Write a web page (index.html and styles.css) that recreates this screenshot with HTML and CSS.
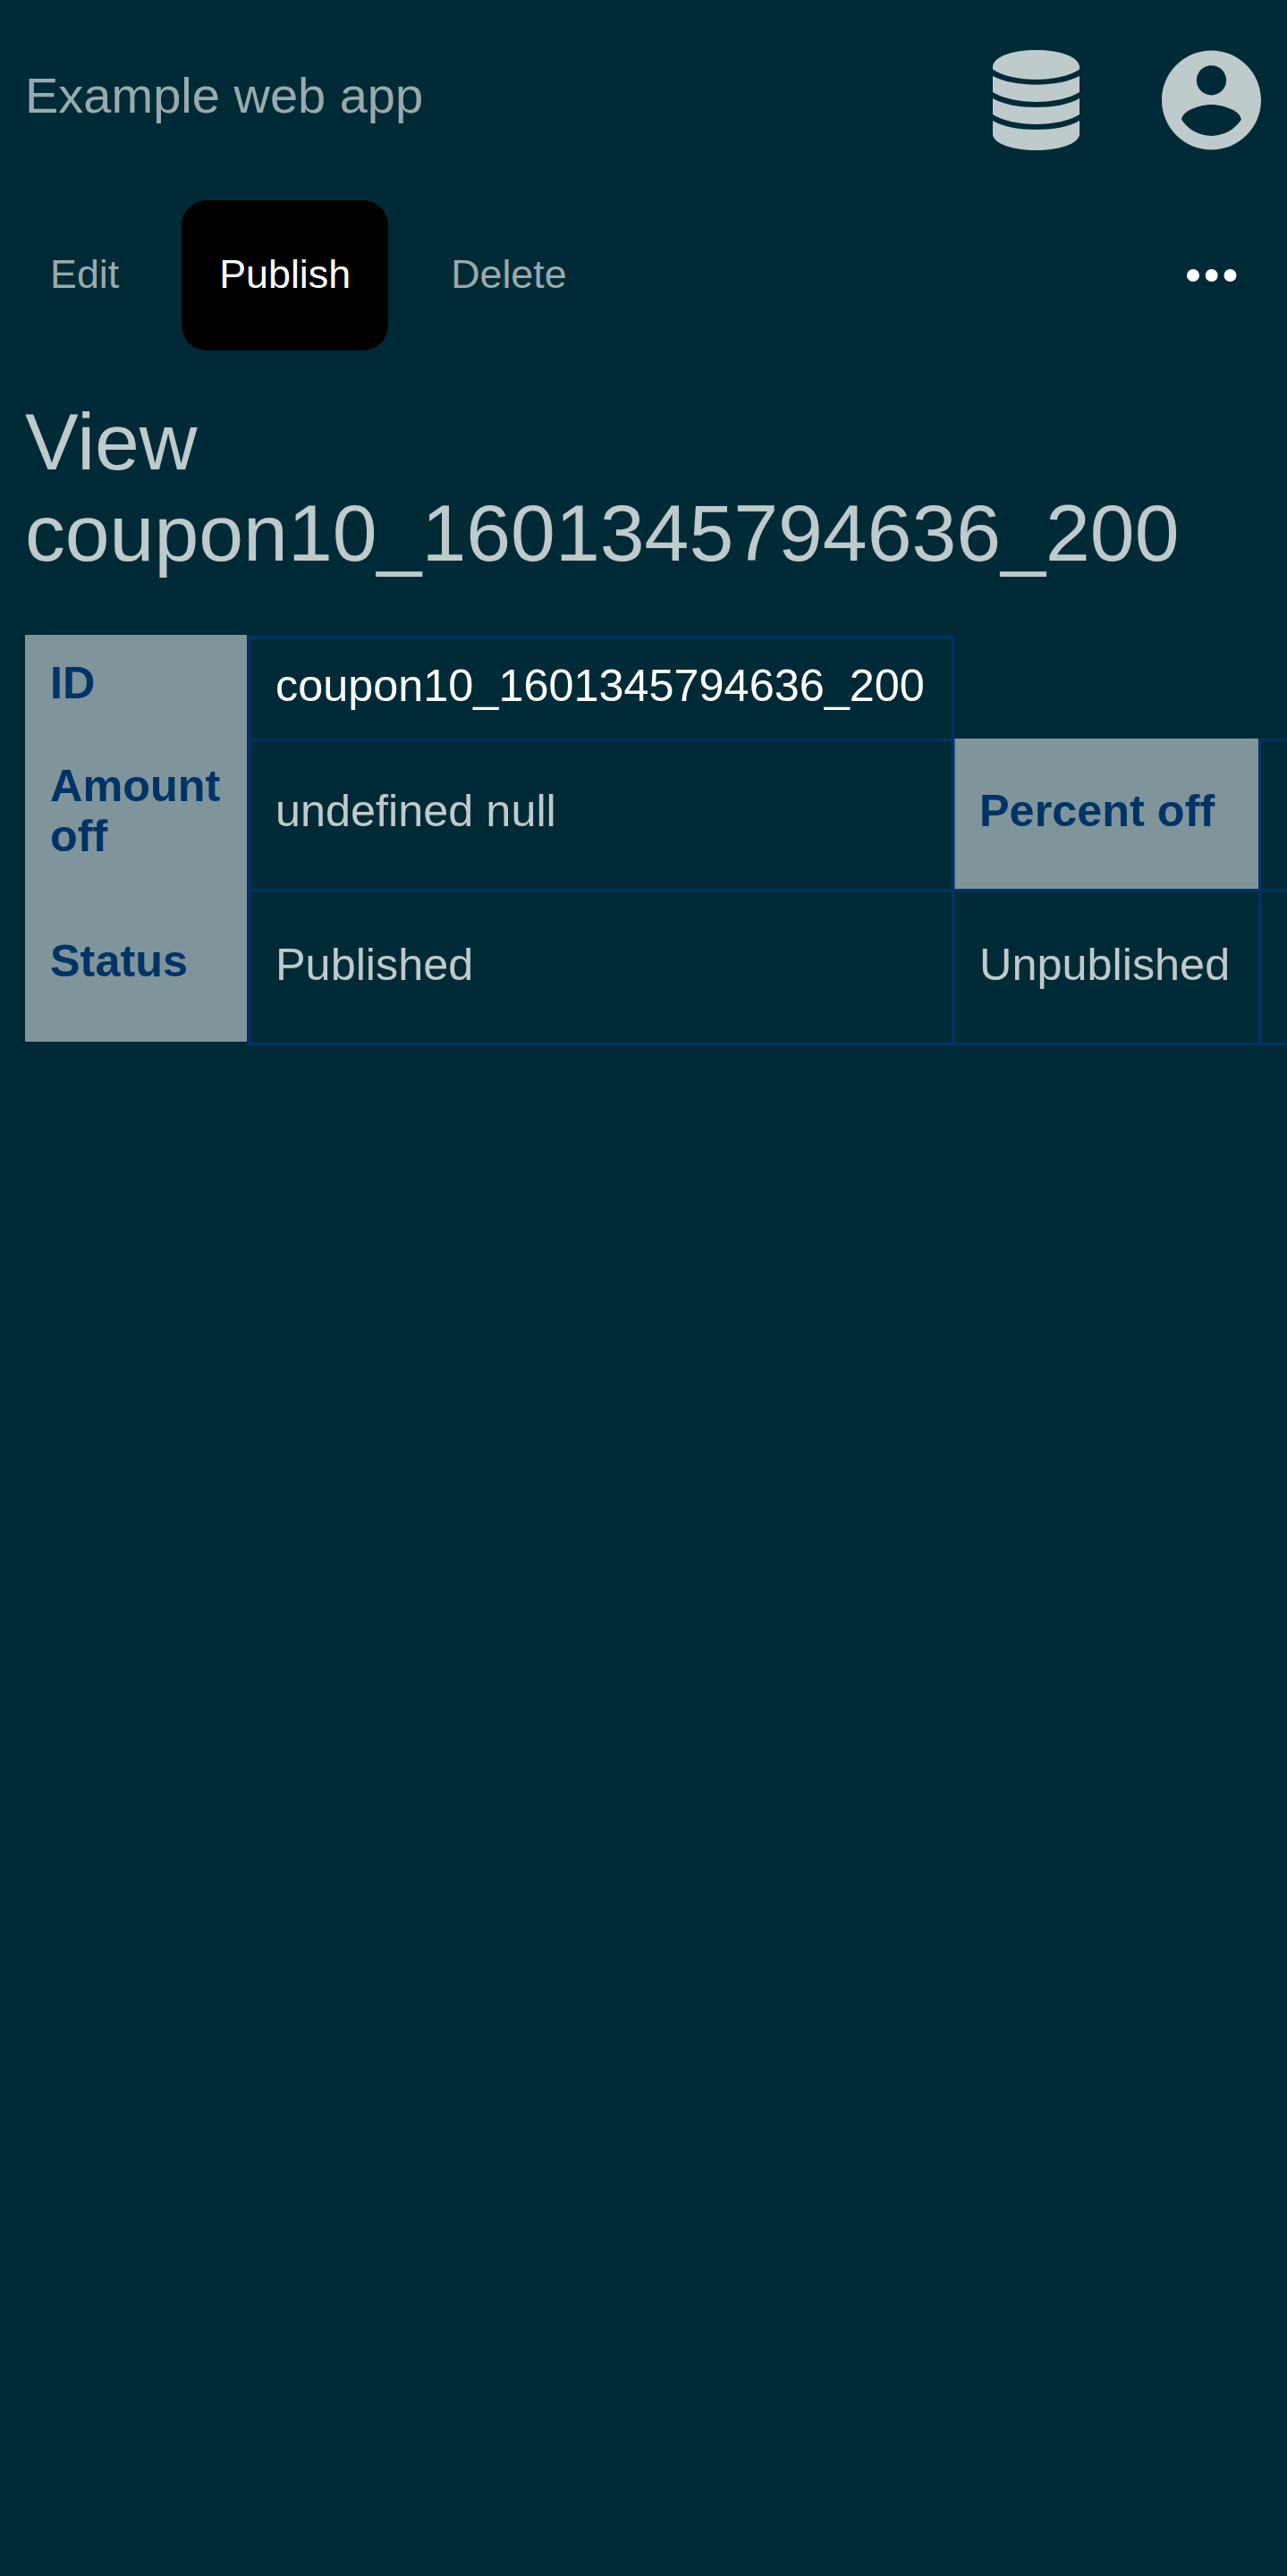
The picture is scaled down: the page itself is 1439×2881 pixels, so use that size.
FILE: index.html
```html
<!DOCTYPE html>
<html lang="en">
<head>
<meta charset="utf-8">
<title>Example web app</title>
<link rel="stylesheet" href="styles.css">
</head>
<body>
<header class="topbar">
  <a class="brand">Example web app</a>
  <nav class="topnav">
    <svg class="icon-db" viewBox="0 0 97 112"><path d="M0 18C2 7 22 0 48.500 0S95 7 97 18V21.500C86 29 67 33 48.500 33S11 29 0 21.500ZM0 29C12 35.500 30 38.700 48.500 38.700S85 35.500 97 29V47C86 54 67 58 48.500 58S11 54 0 47ZM0 54C12 61 30 64 48.500 64S85 61 97 54V72C86 79 67 83 48.500 83S11 79 0 72ZM0 79C12 86 30 89 48.500 89S85 86 97 79V95C95 105 75 112 48.500 112S2 105 0 95Z"/></svg>
    <svg class="icon-user" viewBox="2 2 20 20"><path d="M12 2C6.480 2 2 6.480 2 12s4.480 10 10 10 10-4.480 10-10S17.520 2 12 2zm0 3c1.660 0 3 1.340 3 3s-1.340 3-3 3-3-1.340-3-3 1.340-3 3-3zm0 14.200c-2.500 0-4.710-1.280-6-3.220.03-1.990 4-3.080 6-3.080 1.990 0 5.970 1.090 6 3.080-1.290 1.940-3.500 3.220-6 3.220z"/></svg>
  </nav>
</header>
<nav class="toolbar">
  <a class="action">Edit</a>
  <a class="action action-primary">Publish</a>
  <a class="action">Delete</a>
  <svg class="icon-more" viewBox="0 0 56 14"><circle cx="7" cy="7" r="7"/><circle cx="27.700" cy="7" r="7"/><circle cx="48.500" cy="7" r="7"/></svg>
</nav>
<main>
  <h1>View coupon10_1601345794636_200</h1>
  <div class="details">
    <div class="labels">
      <div class="label label-id">ID</div>
      <div class="label label-amount">Amount off</div>
      <div class="label label-status">Status</div>
    </div>
    <div class="values">
      <div class="cell cell-id">coupon10_1601345794636_200</div>
      <div class="cell blank"></div>
      <div class="none"></div>
      <div class="cell">undefined null</div>
      <div class="cell heading">Percent off</div>
      <div class="cell"></div>
      <div class="cell last">Published</div>
      <div class="cell last">Unpublished</div>
      <div class="cell last"></div>
    </div>
  </div>
</main>
</body>
</html>
```
FILE: styles.css
```css
* { box-sizing: border-box; }
html, body { margin: 0; background: #002b36; }
body {
  min-height: 2881px;
  overflow: hidden;
  font-family: "Liberation Sans", Arial, sans-serif;
  color: #bfcacd;
}
.topbar {
  display: flex;
  justify-content: space-between;
  align-items: center;
  height: 224px;
  padding: 0 29px 0 28px;
}
.brand {
  font-size: 56px;
  line-height: 63px;
  padding-bottom: 11px;
  color: #99aaaf;
}
.topnav { display: flex; gap: 92px; }
.topnav svg { height: 112px; fill: #bfcacd; display: block; }
.icon-db { width: 97px; }
.icon-user { width: 111px; }
.toolbar {
  display: flex;
  align-items: center;
  gap: 42px;
  height: 168px;
  padding: 0 56px 0 28px;
  font-size: 44.8px;
  line-height: 50px;
}
.action { padding: 0 28px 4px; color: #99aaaf; }
.action-primary {
  padding: 57px 42px 61px;
  border-radius: 28px;
  background: #000;
  color: #fff;
}
.icon-more { width: 56px; height: 14px; margin-left: auto; fill: #fff; }
h1 {
  margin: 51px 28px 63px;
  font-size: 89.6px;
  font-weight: 400;
  line-height: 102px;
}
.details {
  display: flex;
  align-items: flex-start;
  margin-left: 28px;
  font-size: 50.4px;
  line-height: 56px;
}
.labels {
  flex: none;
  width: 248px;
  height: 455px;
  margin-right: 1px;
  background: #80959b;
  color: #036;
  font-weight: 700;
}
.label { padding-left: 28px; }
.label-id { height: 116px; padding-top: 26px; }
.label-amount { height: 168px; padding-top: 25px; }
.label-status { padding-top: 53px; }
.values {
  flex: none;
  display: grid;
  grid-template-columns: 787px 343px 60px;
  grid-template-rows: 115px 168px 175px;
  margin-top: 1px;
}
.cell {
  display: flex;
  align-items: center;
  padding: 0 28px 9px;
  border: 0 solid #036;
  border-width: 3px 0 0 3px;
  box-shadow: inset 1px 1px 0 rgba(0, 51, 102, 0.5);
  white-space: nowrap;
}
.cell-id { padding-bottom: 6px; color: #fff; }
.blank { border-top-width: 0; box-shadow: none; }
.heading {
  border-top-width: 0;
  box-shadow: inset 1px 0 0 rgba(0, 51, 102, 0.5);
  background: #80959b;
  color: #036;
  font-weight: 700;
  padding-bottom: 6px;
}
.last { border-bottom-width: 3px; padding-bottom: 5px; }
```
